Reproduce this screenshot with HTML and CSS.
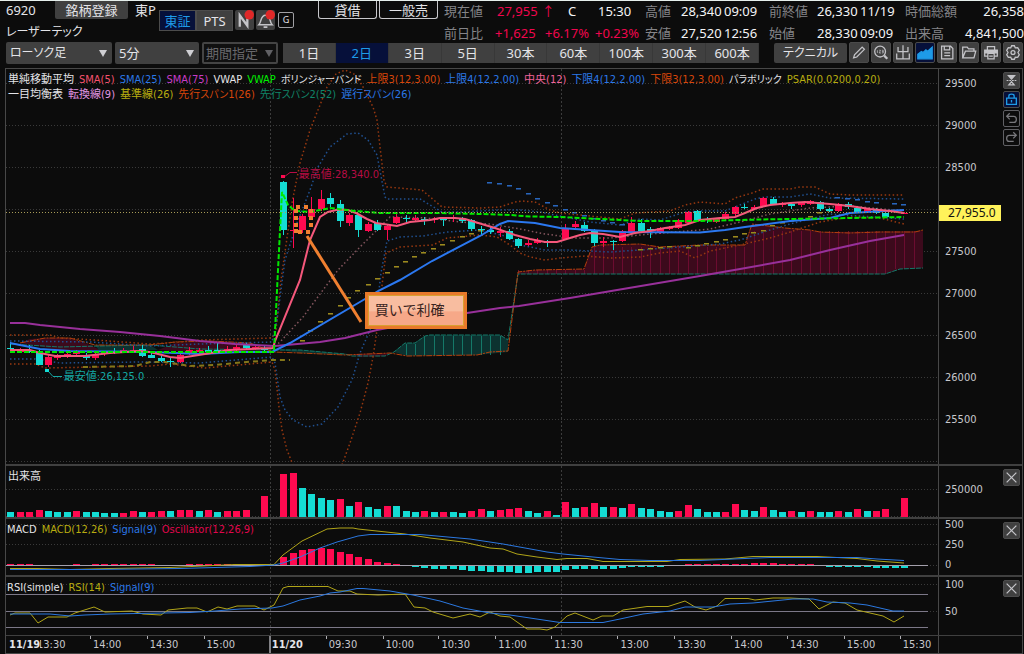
FILE: index.html
```html
<!DOCTYPE html>
<html lang="ja">
<head>
<meta charset="utf-8">
<meta name="viewport" content="width=device-width, initial-scale=1">
<title>6920 レーザーテック</title>
<link rel="stylesheet" href="styles.css">
</head>
<body>
<header class="quote">
  <div class="ident">
    <div class="ident-row"><span class="code">6920</span><button class="btn register">銘柄登録</button><span class="market">東P</span></div>
    <h1 class="name">レーザーテック</h1>
  </div>
  <div class="venue">
    <button class="venue-btn active">東証</button><button class="venue-btn">PTS</button>
    <button class="mini" aria-label="ニュース"><svg viewBox="0 0 20 20"><path d="M5 17V5L13 16V4" fill="none" stroke="#c4c4c8" stroke-width="2.4"/><circle cx="15" cy="4.500" r="5" fill="#e02828"/></svg></button>
    <button class="mini" aria-label="通知"><svg viewBox="0 0 20 20"><path d="M3 15C6 12 4.500 5 10 5S14 12 17 15ZM8 17.500H12" fill="none" stroke="#c4c4c8" stroke-width="1.600"/><circle cx="15" cy="4.500" r="5" fill="#e02828"/></svg></button>
    <button class="mini outline">G</button>
  </div>
  <div class="tags"><button class="tag">貸借</button><button class="tag">一般売</button></div>
  <dl class="stat now">
    <div><dt>現在値</dt><dd class="up price">27,955<span class="arrow">↑</span></dd><dd class="flag">C</dd><dd>15:30</dd></div>
    <div><dt>前日比</dt><dd class="up diff">+1,625</dd><dd class="up diff">+6.17%</dd><dd class="up">+0.23%</dd></div>
  </dl>
  <dl class="stat range">
    <div><dt>高値</dt><dd class="val">28,340</dd><dd>09:09</dd></div>
    <div><dt>安値</dt><dd class="val">27,520</dd><dd>12:56</dd></div>
  </dl>
  <dl class="stat open">
    <div><dt>前終値</dt><dd class="val">26,330</dd><dd>11/19</dd></div>
    <div><dt>始値</dt><dd class="val">28,330</dd><dd>09:09</dd></div>
  </dl>
  <dl class="stat total">
    <div><dt>時価総額</dt><dd>26,358</dd></div>
    <div><dt>出来高</dt><dd>4,841,500</dd></div>
  </dl>
</header>

<nav class="toolbar" aria-label="チャート設定">
  <span class="pick pick-type"><select aria-label="チャート種類"><option>ローソク足</option></select></span>
  <span class="pick pick-unit"><select aria-label="足種"><option>5分</option></select></span>
  <span class="pick pick-term off"><select aria-label="期間" disabled><option>期間指定</option></select></span>
  <div class="spans">
    <button>1日</button><button class="active">2日</button><button>3日</button><button>5日</button><button>30本</button><button>60本</button><button>100本</button><button>300本</button><button>600本</button>
  </div>
  <button class="btn technical">テクニカル</button>
  <div class="tools">
    <button aria-label="描画"><svg viewBox="0 0 20 20"><path d="M4 16L5 12.500L13.500 4L16 6.500L7.500 15Z"/></svg></button>
    <button aria-label="数値検索"><svg viewBox="0 0 20 20"><circle cx="9" cy="9" r="6"/><path d="M13.500 13.500L17 17" stroke-width="2.500"/><path d="M6 7.500V10.500M8 7.500H9.500L8 10.500H10M11 7.500H12.500V10.500H11M11 9H12.500" stroke-width=".8"/></svg></button>
    <button aria-label="出来高表示"><svg viewBox="0 0 20 20"><path d="M10 2V17M4.500 4V9H15.500V4M3 11V17H17V11"/></svg></button>
    <button class="active" aria-label="チャート"><svg viewBox="0 0 20 20"><path d="M2 17V12L6 9L8 10L11 7L13 8.500L18 4V17Z" fill="#1e9be8" stroke="#1e9be8"/></svg></button>
    <button aria-label="保存"><svg viewBox="0 0 20 20"><path d="M4 3H14L16.500 5.500V17H4ZM7 3V7H13V3M7 10.500H13.500M7 13.500H13.500"/></svg></button>
    <button aria-label="開く"><svg viewBox="0 0 20 20"><path d="M3 16V4H8L9.500 6H15.500V8.500M3 16L6 8.500H17.500L15.500 16Z"/></svg></button>
    <button aria-label="印刷"><svg viewBox="0 0 20 20"><path d="M6 7V3.500H14V7M6 14H3V7.500H17V14H14M6.500 11H13.500V17H6.500ZM8 14H12"/><path d="M3.500 8H16.500V10.500H3.500Z" fill="#c4c4c8"/></svg></button>
    <button aria-label="設定"><svg viewBox="0 0 20 20"><path d="M8.500 2.500H11.500L12.500 4.800L15.200 4.600L17 7.600L15.500 10L17 12.400L15.200 15.400L12.500 15.200L11.500 17.500H8.500L7.500 15.200L4.800 15.400L3 12.400L4.500 10L3 7.600L4.800 4.600L7.500 4.800Z"/><circle cx="10" cy="10" r="2.200"/></svg></button>
  </div>
</nav>

<main class="chart">
  <section class="panel panel-price">
    <div class="plot">
      <svg class="canvas" id="price" viewBox="6 69 932 395" preserveAspectRatio="none" aria-hidden="true"></svg>
      <div class="legend">
        <span>単純移動平均</span><span class="c-pink">SMA(5)</span><span class="c-blue">SMA(25)</span><span class="c-violet">SMA(75)</span><span>VWAP</span><span class="c-green">VWAP</span><span class="kana">ボリンジャーバンド</span><span class="c-orange">上限3(12,3.00)</span><span class="c-blue">上限4(12,2.00)</span><span class="c-rose">中央(12)</span><span class="c-blue">下限4(12,2.00)</span><span class="c-orange">下限3(12,3.00)</span><span class="kana">パラボリック</span><span class="c-yellow">PSAR(0.0200,0.20)</span>
      </div>
      <div class="legend">
        <span>一目均衡表</span><span class="c-plum">転換線(9)</span><span class="c-yellow">基準線(26)</span><span class="c-orange">先行<span class="kana">スパン</span>1(26)</span><span class="c-teal">先行<span class="kana">スパン</span>2(52)</span><span class="c-blue">遅行<span class="kana">スパン</span>(26)</span>
      </div>
      <span class="extreme high">最高値:28,340.0</span>
      <span class="extreme low">最安値:26,125.0</span>
      <div class="callout">買いで利確</div>
    </div>
    <div class="axis">
      <ol class="scale scale-price"><li>29500</li><li>29000</li><li>28500</li><li class="under-tag"></li><li>27500</li><li>27000</li><li>26500</li><li>26000</li><li>25500</li></ol>
      <span class="last">27,955.0</span>
      <div class="side">
        <button class="sq" aria-label="縦軸調整"><svg viewBox="0 0 17 17"><path d="M5 3H12L8.500 7Z" fill="#c4c4c8"/><path d="M3 8.500H14" stroke-dasharray="2 1"/><path d="M5.500 13.500L8.500 10L11.500 13.500Z"/></svg></button>
        <button class="sq active" aria-label="固定"><svg viewBox="0 0 17 17"><path d="M3 7H14V14H3ZM5.500 7V4.500Q5.500 2.500 8.500 2.500T11.500 4.500V7M8.500 9V12" stroke="#1e9be8" stroke-width="1.500"/></svg></button>
        <button class="sq dark" aria-label="元に戻す"><svg viewBox="0 0 17 17"><path d="M3 6H11Q14 6 14 9.500T11 13H6M6.500 2.500L3 6L6.500 9.500"/></svg></button>
        <button class="sq dark" aria-label="やり直す"><svg viewBox="0 0 17 17"><path d="M14 6H6Q3 6 3 9.500T6 13H11M10.500 2.500L14 6L10.500 9.500"/></svg></button>
      </div>
    </div>
  </section>

  <section class="panel panel-volume">
    <div class="plot">
      <svg class="canvas" id="volume" viewBox="6 466 932 51" preserveAspectRatio="none" aria-hidden="true"></svg>
      <div class="legend"><span>出来高</span></div>
    </div>
    <div class="axis">
      <ol class="scale scale-volume"><li>250000</li></ol>
      <div class="side"><button class="sq" aria-label="閉じる"><svg viewBox="0 0 17 17"><path d="M3 3L14 14M14 3L3 14"/></svg></button></div>
    </div>
  </section>

  <section class="panel panel-macd">
    <div class="plot">
      <svg class="canvas" id="macd" viewBox="6 519 932 56" preserveAspectRatio="none" aria-hidden="true"></svg>
      <div class="legend flush"><span>MACD</span><span class="c-yellow">MACD(12,26)</span><span class="c-blue">Signal(9)</span><span class="c-red">Oscillator(12,26,9)</span></div>
    </div>
    <div class="axis">
      <ol class="scale scale-macd"><li>500</li><li>250</li><li>0</li></ol>
      <div class="side"><button class="sq" aria-label="閉じる"><svg viewBox="0 0 17 17"><path d="M3 3L14 14M14 3L3 14"/></svg></button></div>
    </div>
  </section>

  <section class="panel panel-rsi">
    <div class="plot">
      <svg class="canvas" id="rsi" viewBox="6 577 932 58" preserveAspectRatio="none" aria-hidden="true"></svg>
      <div class="legend flush"><span>RSI(simple)</span><span class="c-yellow">RSI(14)</span><span class="c-blue">Signal(9)</span></div>
    </div>
    <div class="axis">
      <ol class="scale scale-rsi"><li>100</li><li>50</li></ol>
      <div class="side"><button class="sq" aria-label="閉じる"><svg viewBox="0 0 17 17"><path d="M3 3L14 14M14 3L3 14"/></svg></button></div>
    </div>
  </section>

  <section class="panel panel-time">
    <ol class="plot times">
      <li style="left:3%">13:30</li><li style="left:9%">14:00</li><li style="left:15.1%">14:30</li><li style="left:21.200%">15:00</li>
      <li class="day first" style="left:0%">11/19</li><li class="day" style="left:28.200%">11/20</li>
      <li style="left:34.300%">09:30</li><li style="left:40.400%">10:00</li><li style="left:46.400%">10:30</li><li style="left:52.500%">11:00</li><li style="left:58.500%">11:30</li><li style="left:65.600%">13:00</li><li style="left:71.700%">13:30</li><li style="left:77.800%">14:00</li><li style="left:83.800%">14:30</li><li style="left:89.900%">15:00</li><li style="left:95.900%">15:30</li>
    </ol>
    <div class="axis"></div>
  </section>
</main>
<script src="chart.js"></script>
</body>
</html>
```

FILE: styles.css
```css
* { box-sizing: border-box; }
body {
  margin: 0;
  min-height: 100vh;
  display: flex;
  flex-direction: column;
  overflow-x: hidden;
  background: #0c0c0c;
  color: #e4e4e8;
  border-top: 1px solid #e6efec;
  font: 13px/18px "Noto Sans", "Noto Sans CJK JP", sans-serif;
}
button, select { font: inherit; color: inherit; border: 0; padding: 0; margin: 0; background: #404040; }
button { white-space: nowrap; }
ol, dl, dd, h1 { margin: 0; padding: 0; list-style: none; font-weight: 400; }
svg { display: block; }

/* quote header */
.quote { display: flex; height: 41px; overflow: hidden; white-space: nowrap; }
.ident { width: 159px; padding-left: 6px; flex: none; }
.ident-row { display: flex; gap: 7px; height: 20px; }
.code { width: 42px; }
.register { width: 73px; height: 18px; border-radius: 0 0 2px 2px; }
.name { font-size: 12px; line-height: 22px; font-feature-settings: "palt"; }
.venue { display: flex; width: 159px; padding-top: 9px; flex: none; align-items: flex-start; }
.venue-btn { width: 37px; height: 21px; border: 1px solid #4c4c4c; }
.venue-btn.active, .spans .active { background: #06103a; color: #1e9be8; }
.mini { width: 19px; height: 20px; margin-left: 2px; border-radius: 2px; }
.mini svg { width: 19px; height: 20px; }
.mini.outline { width: 16px; height: 16px; margin: 2px 0 0 3px; border: 1px solid #a0a0a4; background: none; font-size: 9px; line-height: 14px; }
.tags { display: flex; gap: 2px; width: 126px; flex: none; }
.tag { width: 59px; height: 18px; border: 1px solid #c8c8cc; border-top: 0; border-radius: 0 0 3px 3px; background: none; }
.stat { flex: none; color: #f4f4f6; }
.stat div { display: flex; height: 22px; line-height: 20px; }
.stat dt { color: #848488; }
.now { width: 201px; }
.now dt { width: 51px; }
.now .price { width: 73px; padding-left: 2px; }
.now .arrow { margin-left: 4px; }
.now .flag { width: 30px; }
.now .diff { width: 50px; }
.up { color: #f0064e; }
.range { width: 124px; }
.range dt { width: 36px; }
.range .val { width: 43px; }
.open { width: 136px; }
.open dt { width: 48px; }
.open .val { width: 43px; }
.total { flex: 1 0 119px; }
.total div { justify-content: space-between; }

/* toolbar */
.toolbar { display: flex; height: 22px; margin: 0 1px 4px 6px; }
.pick { position: relative; display: flex; margin-right: 3px; flex: none; }
.pick select { width: 100%; appearance: none; padding-left: 4px; border-radius: 2px; }
.pick::after { content: ""; position: absolute; right: 5px; top: 8px; border: 4px solid transparent; border-top: 7px solid #d0d0d4; border-bottom: 0; pointer-events: none; }
.pick-type { width: 106px; }
.pick-type select { font-size: 12px; font-feature-settings: "palt"; }
.pick-unit { width: 84px; }
.pick-term { width: 76px; margin-right: 5px; }
.off select { background: #101010; color: #68686c; border: 2px solid #444; opacity: 1; padding-left: 2px; }
.off::after { border-top-color: #606064; }
.spans { display: grid; grid-template-columns: repeat(9, 1fr); flex: 1; margin: 1px 15px 1px 0; }
.spans button { border-right: 1px solid #383838; }
.technical { width: 73px; border-radius: 2px; margin: 1px 2px 1px 0; font-size: 12px; font-feature-settings: "palt"; }
.tools { display: grid; grid-template-columns: repeat(8, 20px); gap: 2px; }
.tools button { height: 21px; border: 1px solid #4a4a4a; border-radius: 2px; }
.tools button.active { background: #06103a; }
.tools svg { width: 18px; height: 19px; }
.tools svg, .sq svg { fill: none; stroke: #c4c4c8; stroke-width: 1.4; }

/* chart frame */
.chart { display: flex; flex-direction: column; flex: 1; margin: 0 1px 0 5px; border: 1px solid #484848; }
.panel { display: grid; grid-template-columns: 1fr 84px; border-bottom: 2px solid #404040; }
.panel-price { flex: 1 0 397px; }
.panel-volume { height: 53px; }
.panel-macd { height: 58px; }
.panel-rsi { height: 59px; border-bottom-width: 1px; }
.panel-time { height: 17px; border-bottom: 0; }
.plot { position: relative; overflow: hidden; }
.canvas { position: absolute; inset: 0; width: 100%; height: 100%; }
.axis { position: relative; display: flex; justify-content: space-between; border-left: 1px solid #484848; padding: 3px 2px 0 6px; }
.side { display: flex; flex-direction: column; gap: 2px; }
.sq { width: 17px; height: 17px; border: 1px solid #4c4c4c; border-radius: 2px; }
.sq svg { width: 15px; height: 15px; }
.sq.active { background: #06103a; }
.sq.dark { background: #0c0c0c; border-color: #606064; }
.sq.dark svg { stroke: #78787c; }
.scale, .legend, .times, .extreme { font-family: "DejaVu Sans Condensed", "Noto Sans CJK JP", sans-serif; font-size: 11px; }
.scale { display: grid; align-content: start; line-height: 14px; color: #c8c8cc; }
.scale-price { padding-top: 5px; gap: 28px; }
.under-tag { height: 14px; }
.scale-volume { padding-top: 14px; }
.scale-macd { margin-top: -4px; gap: 6px; }
.scale-rsi { margin-top: -2px; gap: 13px; }
.last { position: absolute; left: 0; top: 34.400%; width: 62px; height: 16px; background: #fff25a; color: #111; font-size: 12px; line-height: 16px; padding-left: 9px; }

/* legends */
.legend { position: relative; display: flex; gap: 5px; padding-left: 2px; line-height: 15px; white-space: nowrap; }
.panel-price .legend:first-of-type { padding-top: 3px; }
.legend.flush { padding: 3px 0 0 1px; }
.panel-volume .legend { padding-top: 3px; }
.kana { font-size: 10px; font-feature-settings: "palt"; }
.c-pink { color: #f5526e; }
.c-blue { color: #2b78e8; }
.c-violet { color: #c83cc8; }
.c-green { color: #00f000; }
.c-orange { color: #d8460a; }
.c-rose { color: #f0649a; }
.c-plum { color: #e094e0; }
.c-yellow { color: #b8ac10; }
.c-teal { color: #108468; }
.c-red { color: #e0064c; }

/* notes on the price plot */
.extreme { position: absolute; line-height: 14px; }
.high { left: 31.400%; top: 25%; color: #b80c44; }
.low { left: 6.200%; top: 76.200%; color: #14a8a4; }
.callout {
  position: absolute; left: 38.500%; top: 56.500%;
  width: 102px; height: 37px; padding-left: 7px;
  border: 3px solid #e8792a; outline: 1px solid #d8a030; outline-offset: -4px;
  background: linear-gradient(#f8bda0 50%, #f6a888 55%);
  color: #3a2420; font-size: 14px; line-height: 29px;
}

/* time axis */
.times { line-height: 17px; color: #c8c8cc; }
.times li { position: absolute; top: 0; padding-left: 3px; }
.times li::before { content: ""; position: absolute; left: 0; top: 0; width: 1px; height: 3px; background: #b0b0b4; }
.times .day { font-weight: 700; color: #e4e4e8; background: #0c0c0c; }
.times .day::before { width: 2px; height: 17px; background: #808084; }
.times .first::before { display: none; }
```

FILE: chart.js
```js
const UP = '#ff0a50', DOWN = '#14dcd4';
const barX = k => 10.3 + 9.41 * k;
const layers = {};

function add(id, tag, attrs) {
  const el = document.createElementNS('http://www.w3.org/2000/svg', tag);
  for (const name in attrs) el.setAttribute(name, attrs[name]);
  layers[id] = layers[id] || document.getElementById(id);
  layers[id].appendChild(el);
}
const rect = (id, x, y, w, h, fill) =>
  add(id, 'rect', { x: Math.round(x), y, width: w, height: h, fill });
function line(id, points, stroke, width = 1, dash = '') {
  add(id, 'polyline', {
    points, stroke, fill: 'none', 'stroke-width': width,
    'stroke-dasharray': dash, 'vector-effect': 'non-scaling-stroke'
  });
}
const hline = (id, y, to = 938, stroke = '#3a3a3a', dash = '1 2') =>
  line(id, `6,${y} ${to},${y}`, stroke, 1, dash);

/* grid */
for (let i = 0; i < 10; i++) hline('price', 83.5 + 42 * i);
hline('volume', 489.5);
hline('volume', 516.5);
hline('macd', 524.5);
hline('macd', 544.5);
hline('macd', 565.5);
hline('rsi', 584.5);
hline('rsi', 611.5);
[['price', 69, 464], ['volume', 466, 517], ['macd', 519, 575], ['rsi', 577, 635]].forEach(([id, a, b]) => {
  line(id, `270.5,${a} 270.5,${b}`, '#3c3c3c', 1, '2 2');
  line(id, `561.5,${a} 561.5,${b}`, '#3c3c3c', 1, '2 2');
});

/* ichimoku cloud */
const RED_FILL = '#3c0a1c', TEAL_FILL = '#0c3230';
const cloud = (points, fill) => add('price', 'polygon', { points, fill });
cloud('20,343 30,339 45,338 70,338 90,345 100,350 60,350', RED_FILL);
cloud('95,345 150,345 158,350 100,352', TEAL_FILL);
cloud('158,350 175,343 210,341 245,343 272,350 240,352 200,353', RED_FILL);
cloud('273,349 300,350 345,354 345,355 300,353', TEAL_FILL);
cloud('352,354 390,353 385,356 360,357', RED_FILL);
cloud('394,352 405,343 415,343 425,336 430,335 500,335 508,340 508,352 477,355 407,356', TEAL_FILL);
cloud('518,272 535,270 584,269 592,247 600,245 640,244 660,247 700,245 745,245 752,224 785,228 810,230 820,232 923,231 923,268 900,269 885,274 518,274', RED_FILL);
for (let k = 42; k < 53; k++) {
  const top = k < 44 ? 344 : 336;
  rect('price', barX(k), top, 1, 355 - top, '#147868');
}
for (let k = 54; k < 97; k++) {
  const x = barX(k), top = x < 588 ? 270 : x < 749 ? 247 : 231;
  rect('price', x, top, 1, (x > 893 ? 269 : 274) - top, '#6c0c30');
}
const CLOUD_A = '20,343 45,338 70,338 95,345 150,345 175,342 210,341 250,343 273,352 300,353 345,355 390,353 407,356 477,355 490,352 508,351 518,272 535,270 584,269 592,247 600,245 640,244 660,247 700,245 745,245 752,224 785,228 810,230 820,232 850,233 880,232 915,232 923,230';
const CLOUD_B = '10,344 60,347 100,346 150,345 200,349 273,350 300,350 345,354 352,356 385,356 394,352 405,343 415,343 425,336 430,335 500,335 508,340 518,274 885,274 900,269 923,268';
line('price', CLOUD_B, '#147868', 1, '5 1');
line('price', CLOUD_A, '#b4400c', 1, '6 1 2 1');

/* bollinger bands */
const ORANGE_DIM = '#983810', BLUE_DIM = '#205090';
line('price', '10,335 50,335 60,338 95,340 150,344 180,342 200,340 272,338 276,330 281,280 292,203 300,163 310,130 322,100 327,87 336,74 345,70 354,74 362,85 373,107 377,120 380,147 384,180 387,187 422,190 442,207 480,208 500,207 515,202 522,201 535,202 550,210 560,213 590,216 620,219 635,213 670,211 685,205 700,202 725,204 735,198 752,193 763,189 790,189 800,187 815,187 830,194 850,195 904,195', ORANGE_DIM, 1.5, '1.5 2.5');
line('price', '10,341 90,342 150,346 200,344 272,342 277,320 285,260 297,223 310,190 318,167 330,147 347,134 358,133 368,140 377,155 385,197 387,199 420,199 442,212 460,212 500,210 520,210 540,212 560,216 590,222 620,225 640,219 660,220 685,212 700,211 725,211 740,205 755,199 765,197 790,197 810,194 830,198 904,199', BLUE_DIM, 1.5, '1.5 2.5');
line('price', '275,346 280,342 303,317 323,290 338,270 360,247 377,230 390,217 427,218 460,222 490,224 520,229 545,234 575,238 610,238 650,234 700,230 710,229 740,222 770,214 790,211 810,208 850,206 904,211', '#84565e', 1.5, '1.5 2.5');
line('price', '10,359 35,359 60,363 140,362 200,363 272,357 275,363 280,397 285,410 293,420 307,427 322,424 338,407 352,380 360,353 370,330 379,290 381,273 387,241 400,237 423,236 447,232 480,230 505,236 520,245 545,250 570,250 610,252 640,250 680,247 720,244 740,240 770,230 790,224 830,214 904,219', BLUE_DIM, 1.5, '1.5 2.5');
line('price', '10,364 35,364 45,368 150,366 170,364 205,368 272,362 275,370 279,407 282,430 287,450 293,465', ORANGE_DIM, 1.5, '1.5 2.5');
line('price', '342,465 350,443 360,413 368,383 373,357 377,330 383,277 386,253 400,247 433,245 447,238 480,235 497,237 510,245 520,253 530,257 545,260 560,258 585,256 610,258 640,257 660,253 680,251 695,258 710,251 740,245 770,238 790,232 820,222 850,217 880,218 904,224', ORANGE_DIM, 1.5, '1.5 2.5');

/* ichimoku base line and conversion steps */
const step = (list, color, shade) => list.forEach(([x, y]) => {
  rect('price', x - 2, y, 5, 1, color);
  rect('price', x - 2, y + 1, 5, 1, shade);
});
line('price', '83,367 135,366 150,362 165,362 190,366 215,365 235,363 272,360 290,360', '#84761a', 2, '5 4');
step([[302, 340], [310, 330], [320, 321], [330, 313], [340, 305], [348, 297], [357, 290], [368, 284], [377, 278], [387, 272], [396, 266], [405, 261], [414, 256], [423, 252], [433, 248], [442, 244], [452, 240], [462, 236], [471, 233], [480, 230], [640, 249], [650, 248], [660, 247], [669, 246], [688, 247], [697, 245], [706, 243], [716, 241], [725, 239], [735, 236], [744, 233], [753, 232], [763, 230], [772, 225], [782, 222], [791, 220], [800, 218], [810, 216], [819, 212], [829, 210]], '#9c8a1c', '#5c521a');
step([[489, 182], [499, 183], [509, 185], [518, 188], [528, 193], [537, 198], [547, 202], [555, 205], [565, 209], [574, 212], [584, 215], [593, 218], [603, 220], [612, 222], [622, 224], [837, 197], [847, 198], [857, 199], [867, 201], [876, 202], [894, 203], [903, 204]], '#2866bc', '#1c3c6c');

/* candles: [bar, direction, body top, body bottom, wick top, wick bottom] */
const candles = [
  [0, 0, 348, 349, 342, 353], [1, 1, 350, 352, 348, 353], [2, 0, 350, 352, 345, 353], [3, 0, 352, 365, 350, 365], [4, 1, 357, 365, 355, 367], [5, 1, 355, 358, 354, 360],
  [6, 1, 354, 357, 352, 358], [7, 1, 352, 354, 350, 357], [8, 0, 355, 358, 353, 360], [9, 1, 355, 358, 353, 360], [10, 1, 352, 354, 351, 356], [11, 0, 351, 353, 348, 354], [12, 1, 350, 352, 348, 353],
  [13, 1, 350, 352, 346, 353], [14, 0, 349, 356, 345, 357], [15, 0, 355, 358, 353, 358], [16, 0, 358, 361, 356, 362], [17, 0, 361, 362, 357, 367], [18, 1, 355, 362, 353, 363], [19, 1, 350, 354, 347, 355], [20, 1, 350, 352, 348, 353], [21, 0, 350, 352, 346, 353], [22, 0, 350, 352, 342, 353],
  [23, 1, 349, 351, 346, 352], [24, 1, 347, 350, 344, 351], [25, 0, 345, 348, 343, 350], [26, 1, 347, 349, 345, 350], [27, 0, 348, 350, 346, 351],
  [29, 0, 182, 230, 181, 235], [30, 1, 230, 231, 198, 248], [31, 1, 216, 230, 214, 233], [32, 1, 209, 217, 197, 218], [33, 1, 199, 209, 190, 211], [34, 0, 198, 204, 193, 207], [35, 0, 204, 221, 200, 227], [36, 1, 215, 223, 213, 226],
  [37, 0, 215, 230, 214, 237], [38, 1, 224, 231, 222, 232], [39, 0, 223, 230, 220, 231], [40, 1, 226, 230, 224, 240], [41, 1, 217, 223, 214, 224], [42, 0, 218, 219, 215, 223], [43, 1, 218, 220, 215, 221], [44, 0, 219, 220, 217, 225],
  [45, 1, 219, 220, 217, 223], [46, 0, 219, 220, 218, 226], [47, 1, 218, 219, 215, 222], [48, 0, 219, 221, 217, 223], [49, 0, 220, 229, 219, 231], [50, 0, 229, 230, 226, 235], [51, 0, 230, 232, 227, 234], [52, 1, 231, 233, 227, 237],
  [53, 0, 231, 239, 229, 240], [54, 0, 239, 246, 238, 248], [55, 1, 243, 245, 240, 246], [56, 1, 241, 243, 238, 244], [57, 0, 242, 243, 240, 247], [59, 1, 229, 239, 224, 240], [60, 1, 224, 227, 221, 229], [61, 0, 225, 231, 222, 232],
  [62, 0, 231, 243, 229, 246], [63, 1, 241, 243, 237, 247], [64, 0, 241, 242, 240, 250], [65, 1, 231, 241, 230, 242], [66, 1, 223, 232, 217, 233], [67, 0, 223, 231, 219, 232], [68, 0, 229, 231, 227, 238], [69, 1, 228, 233, 227, 234],
  [70, 1, 227, 229, 226, 230], [71, 1, 220, 228, 219, 229], [72, 1, 212, 223, 211, 224], [73, 0, 211, 220, 210, 222], [74, 0, 219, 220, 217, 223], [75, 1, 219, 222, 218, 223], [76, 1, 214, 219, 212, 220], [77, 1, 207, 214, 206, 216],
  [78, 0, 207, 208, 204, 209], [79, 1, 207, 209, 205, 210], [80, 1, 198, 206, 197, 207], [81, 0, 199, 204, 197, 205], [82, 1, 203, 205, 202, 207], [83, 0, 204, 206, 203, 209], [84, 1, 203, 205, 202, 207], [85, 1, 201, 204, 200, 205],
  [86, 0, 202, 209, 201, 211], [87, 0, 209, 211, 208, 212], [88, 1, 204, 211, 203, 212], [89, 0, 204, 207, 202, 209], [90, 0, 208, 213, 206, 213], [91, 1, 209, 212, 208, 213], [92, 0, 209, 213, 208, 214], [93, 0, 213, 217, 211, 218], [95, 1, 213, 214, 212, 214]
];
candles.forEach(([k, dir, top, bottom, high, low]) => {
  const color = dir ? UP : DOWN;
  rect('price', barX(k), high, 1, low - high, color);
  rect('price', barX(k) - 3, top, 7, bottom - top, color);
});

/* moving averages, VWAP and last price */
line('price', '10,323 25,323 40,325 80,329 120,332 160,336 200,341 235,344 275,346 320,342 345,338 377,330 467,313 500,308 519,306 570,298 623,289 700,276 740,269 790,260 830,250 870,241 904,235', '#98309a', 2);
line('price', '10,343 25,346 40,349 70,351 150,352 200,354 240,352 272,352 290,343 365,299 378,291 400,280 432,261 480,236 500,224 508,221 535,223 560,228 590,230 620,232 700,232.500 725,230 745,227 790,221 830,218 850,213 885,211 904,210', '#2b78f0', 2);
line('price', '10,350 30,350 40,353 55,356 85,356 110,353 140,351 150,352 170,357 180,358 205,354 230,350 250,349 273,348 275,341 300,280 310,240 320,217 328,212 338,209.500 348,210 356,213 367,219 376,223 397,226 410,222 430,220 440,218 455,218 465,219 475,222 495,228 515,235 530,239 545,242 557,242 570,238 580,235 590,233 603,234 620,237 635,233 650,231 665,228 685,225 700,220 720,218 735,217 745,213 757,208 770,205 790,203 805,202 830,204 850,206 870,209 890,211 904,213', '#f5587c', 2);
line('price', '10,352 274,352 278,270 282,192 288,205 295,211 310,212 330,208 355,211 380,213 440,213 480,214 510,215 530,216.500 560,217 600,219 640,221 700,221 760,219.500 850,218 904,217', '#00e800', 2, '5 2');
hline('price', 212.5, 938, '#a89c58', '1 2');

/* pointers for the session high and low, and the trade note */
line('price', '284,177 290,172.500 297,172.500', '#b80c44');
rect('price', 281, 175, 4, 3, UP);
line('price', '48,371 53,376.500 62,376.500', '#14a8a4');
rect('price', 45, 369, 4, 3, DOWN);
[[296, 205], [304, 205], [309, 209], [294, 209], [294, 216], [294, 223], [294, 229], [298, 230], [309, 216], [309, 223], [306, 230]].forEach(([x, y]) => rect('price', x, y, 4, 4, '#f08030'));
line('price', '307,236 361,322', '#f08030', 3);

/* volume: height and direction for each bar */
const volume = '5d5r5r7r6d5d5d6r5d5d4d4d4r6r5d5r6r6d7r7r6d7r5d6r6r7r0r21r0r43r44r29d23d19d17d18r11d15r10d8d11r11d6d5d6r5d5r5d4d6r8r6d7r8r9r6d4d6r2d15r9d10r14r10d10r9d13r9d8d6d5d6r12r8d5d5d5r13r7d6d10r7d5d6r5d6r5d5d6r5d8r6d6r8r0r19r';
volume.match(/\d+[rd]/g).forEach((v, k) => {
  const h = parseInt(v, 10);
  if (h) rect('volume', barX(k) - 3, 517 - h, 7, h, v.endsWith('r') ? UP : DOWN);
});

/* MACD */
const oscillator = [1, 1, 1, 0, 0, 0, 0, 1, 0, 1, 1, 1, 1, 1, 1, 1, 0, 0, 0, 1, 1, 1, 1, 1, 1, 1, 0, 0, 0, 8, 12, 15, 16, 17, 16, 13, 11, 8, 6, 3, 2, 1, 0, -1, -2, -3, -3, -3, -4, -5, -5, -6, -6, -6, -7, -7, -6, -6, -6, -4, -3, -3, -3, -3, -3, -2, -1, -1, -1, -1, 0, 0, 1, 1, 1, 1, 1, 1, 1, 2, 2, 2, 1, 1, 1, 1, 0, -1, -1, -1, -1, -1, -2, -2, -2, -2];
oscillator.forEach((v, k) => {
  if (v > 0) rect('macd', barX(k) - 3, 565 - v, 7, v, UP);
  if (v < 0) rect('macd', barX(k) - 3, 566, 7, -v, DOWN);
});
hline('macd', 565.5, 928, '#a4a0ac', '');
line('macd', '10,568.500 38,568.500 70,569.500 110,568.500 170,567.500 235,564.500 274,564.500 283,555 302,541 327,529 340,528 353,528 358,529 405,534 430,538 463,542 490,548 503,549 517,554 537,557 557,559.500 567,558.500 587,558.500 603,561.500 667,561.500 680,559.500 725,559 753,556.500 817,556.500 857,558.500 877,561 904,563', '#b0a418');
line('macd', '10,569.500 95,569.500 180,568.500 250,566.500 274,565 283,563 300,557 320,548 337,542 358,536 370,534.500 420,534.500 470,539 503,544 547,552 563,554 593,557 620,559.500 650,560.500 700,560.500 745,558.500 770,557.500 857,557.500 877,559 904,560.500', '#2b78e0');

/* RSI */
hline('rsi', 594.5, 928, '#7c7888', '');
hline('rsi', 611.5, 928, '#7c7888', '');
hline('rsi', 627.5, 928, '#7c7888', '');
line('rsi', '10,615 15,613 30,613 38,623 48,617 67,617 75,613 94,607 105,612 132,611 143,614 161,615 168,610 187,608 197,608 207,612 218,607 227,609 237,606 255,606 264,610 274,605 283,588 288,586.500 328,586.500 338,591 350,591 357,594 378,595 405,594 414,607 425,608 433,612 453,618 470,614 480,617 490,612 500,616 510,617 527,629 540,629 547,630 555,627 567,616 575,613 593,620 602,616 613,616 623,610 647,606.500 668,606.500 685,601 695,607 706,610 717,606 725,598.500 748,598.500 755,600 773,598 790,598 809,599 819,609 833,602 845,603 857,610 883,616 894,622 904,616', '#b0a418');
line('rsi', '10,614 50,614 70,616 85,615 110,614 190,612.500 215,611 240,609 272,608 283,606 300,600 320,596 330,593 340,592 357,588.500 363,588.500 390,591 413,595 440,601 463,608 490,613 510,615 530,618 560,622.500 603,622.500 620,619 643,614 670,611 685,607 713,607 730,604 753,603 793,599 813,599 827,602 850,603 867,605 893,611 904,611', '#2b78e0');
```
